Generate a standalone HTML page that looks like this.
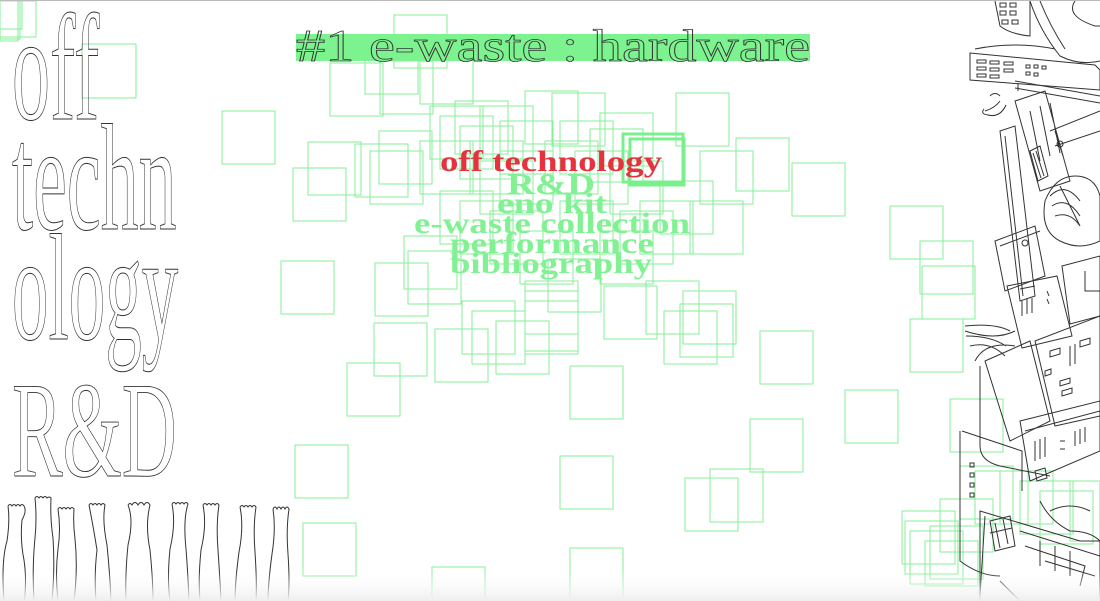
<!DOCTYPE html>
<html><head><meta charset="utf-8"><style>
html,body{margin:0;padding:0;background:#fff;}
body{width:1100px;height:600px;overflow:hidden;position:relative;border-top:1px solid #bbb;box-sizing:border-box;}
svg{position:absolute;left:0;top:0;}
</style></head><body>
<svg width="1100" height="600" viewBox="0 0 1100 600" xmlns="http://www.w3.org/2000/svg">
<defs><linearGradient id="fade" x1="0" y1="0" x2="0" y2="1"><stop offset="0" stop-color="#fff" stop-opacity="0"/><stop offset="1" stop-color="#eee" stop-opacity="1"/></linearGradient></defs>
<g fill="none" stroke="#86ef98" stroke-width="1">
<rect x="0" y="0" width="22" height="28"/><rect x="0" y="0" width="20" height="38"/><rect x="0" y="0" width="36" height="36"/><rect x="0" y="0" width="18" height="40"/>
<rect x="82" y="43" width="54" height="54"/>
<rect x="222" y="110" width="53" height="53"/><rect x="293" y="167" width="53" height="53"/><rect x="308" y="141" width="53" height="53"/><rect x="330" y="62" width="53" height="53"/>
<rect x="355" y="143" width="53" height="53"/><rect x="370" y="150" width="53" height="53"/><rect x="379" y="130" width="53" height="53"/>
<rect x="394" y="14" width="53" height="53"/><rect x="365" y="40" width="53" height="53"/><rect x="380" y="60" width="53" height="53"/><rect x="420" y="50" width="53" height="53"/>
<rect x="281" y="260" width="53" height="53"/><rect x="374" y="322" width="53" height="53"/><rect x="347" y="362" width="53" height="53"/>
<rect x="375" y="262" width="53" height="53"/><rect x="404" y="235" width="53" height="53"/><rect x="408" y="250" width="53" height="53"/>
<rect x="435" y="328" width="53" height="53"/><rect x="462" y="300" width="53" height="53"/><rect x="472" y="310" width="53" height="53"/>
<rect x="496" y="320" width="53" height="53"/><rect x="525" y="300" width="53" height="53"/><rect x="525" y="280" width="53" height="53"/><rect x="525" y="290" width="53" height="60"/>
<rect x="570" y="365" width="53" height="53"/><rect x="604" y="285" width="53" height="53"/><rect x="646" y="280" width="53" height="53"/><rect x="664" y="310" width="53" height="53"/><rect x="683" y="290" width="53" height="53"/><rect x="680" y="303" width="53" height="53"/>
<rect x="295" y="444" width="53" height="53"/><rect x="303" y="522" width="53" height="53"/><rect x="432" y="566" width="53" height="53"/><rect x="570" y="547" width="53" height="53"/>
<rect x="560" y="455" width="53" height="53"/><rect x="685" y="477" width="53" height="53"/><rect x="710" y="468" width="53" height="53"/><rect x="750" y="418" width="53" height="53"/>
<rect x="845" y="389" width="53" height="53"/><rect x="760" y="330" width="53" height="53"/><rect x="792" y="162" width="53" height="53"/><rect x="736" y="137" width="53" height="53"/>
<rect x="676" y="92" width="53" height="53"/><rect x="700" y="150" width="53" height="53"/><rect x="660" y="180" width="53" height="53"/><rect x="690" y="200" width="53" height="53"/>
<rect x="455" y="100" width="53" height="53"/><rect x="480" y="105" width="53" height="53"/><rect x="525" y="90" width="53" height="53"/><rect x="552" y="92" width="53" height="53"/><rect x="600" y="112" width="53" height="53"/>
<rect x="430" y="105" width="53" height="53"/><rect x="440" y="115" width="53" height="53"/><rect x="460" y="125" width="53" height="53"/><rect x="500" y="120" width="53" height="53"/><rect x="560" y="120" width="53" height="53"/><rect x="590" y="128" width="53" height="53"/>
<rect x="420" y="140" width="53" height="53"/><rect x="440" y="190" width="53" height="53"/><rect x="520" y="230" width="53" height="53"/><rect x="548" y="258" width="53" height="53"/><rect x="600" y="230" width="53" height="53"/><rect x="640" y="200" width="53" height="53"/>
<rect x="470" y="140" width="53" height="53"/><rect x="480" y="160" width="53" height="53"/><rect x="500" y="150" width="53" height="53"/><rect x="545" y="140" width="53" height="53"/><rect x="575" y="150" width="53" height="53"/><rect x="610" y="160" width="53" height="53"/>
<rect x="460" y="200" width="53" height="53"/><rect x="490" y="210" width="53" height="53"/><rect x="560" y="200" width="53" height="53"/><rect x="620" y="210" width="53" height="53"/>
<rect x="890" y="205" width="53" height="53"/><rect x="920" y="240" width="53" height="53"/><rect x="922" y="265" width="53" height="53"/><rect x="910" y="318" width="53" height="53"/><rect x="950" y="398" width="53" height="53"/>
<rect x="960" y="465" width="53" height="53"/><rect x="975" y="470" width="53" height="53"/><rect x="1000" y="470" width="53" height="53"/><rect x="1020" y="480" width="53" height="53"/><rect x="1040" y="490" width="53" height="53"/><rect x="1070" y="480" width="30" height="60"/>
<rect x="902" y="510" width="53" height="53"/><rect x="905" y="520" width="53" height="53"/><rect x="910" y="530" width="53" height="53"/><rect x="930" y="525" width="53" height="53"/><rect x="940" y="498" width="53" height="53"/><rect x="925" y="540" width="53" height="45"/>
</g>
<g fill="none" stroke="#7af08c" stroke-width="3"><rect x="623" y="133" width="60" height="48"/><rect x="630" y="138" width="54" height="46"/></g>
<rect x="296" y="33" width="514" height="27" fill="#7cf38e"/>
<text x="296" y="60" font-family="'Liberation Serif', serif" font-size="46" textLength="514" lengthAdjust="spacingAndGlyphs" fill="none" stroke="#333" stroke-width="0.8">#1 e-waste : hardware</text>
<g font-family="'Liberation Serif', serif" font-size="152" fill="none" stroke="#333" stroke-width="1">
<text transform="translate(12,118) scale(0.5,1)">off</text>
<text transform="translate(12,228) scale(0.5,1)">techn</text>
<text transform="translate(12,338) scale(0.48,1)">ology</text>
<text transform="translate(12,475) scale(0.5,0.9)">R&amp;D</text>
</g>
<g font-family="'Liberation Serif', serif" font-weight="bold" text-anchor="middle" fill="#82f194">
<text x="551" y="193" font-size="30" textLength="88" lengthAdjust="spacingAndGlyphs">R&amp;D</text>
<text x="552" y="212" font-size="30" textLength="110" lengthAdjust="spacingAndGlyphs">eno kit</text>
<text x="552" y="232" font-size="30" textLength="276" lengthAdjust="spacingAndGlyphs">e-waste collection</text>
<text x="552" y="252" font-size="30" textLength="204" lengthAdjust="spacingAndGlyphs">performance</text>
<text x="551" y="272" font-size="30" textLength="202" lengthAdjust="spacingAndGlyphs">bibliography</text>
</g>
<text x="551" y="170" font-family="'Liberation Serif', serif" font-weight="bold" font-size="30" text-anchor="middle" textLength="222" lengthAdjust="spacingAndGlyphs" fill="#e5323e">off technology</text>
<g fill="none" stroke="#333" stroke-width="1">
<path d="M8 505 q2 -3 4 0 q2 -3 4 0 q2 -3 4 0 q2 -3 4 0 q3 5 -2 14 q-2 20 2 40 q3 20 0 45 M8 505 q2 15 -1 35 q-6 20 -3 60"/>
<path d="M35 497 q2 -3 4 0 q2 -3 4 0 q2 -3 4 0 q2 -2 4 0 q-1 20 2 40 q2 30 -1 63 M35 497 q2 20 0 40 q-3 30 -1 63"/>
<path d="M58 508 q2 -3 4 0 q2 -3 4 0 q2 -3 4 0 q2 -3 4 0 q-1 15 1 30 q3 30 -1 62 M58 508 q3 20 0 40 q-3 25 0 52"/>
<path d="M89 504 q2 -3 4 0 q2 -3 4 0 q2 -3 4 0 q2 -3 4 0 q-3 15 2 40 q3 30 4 56 M89 504 q4 20 8 45 q-3 25 -1 51"/>
<path d="M128 504 q2 -3 4 0 q3 -5 6 0 q3 -5 6 0 q3 -5 6 0 q-5 20 0 45 q3 30 3 51 M128 504 q6 15 0 40 q-3 30 -2 56"/>
<path d="M172 503 q2 -3 4 0 q2 -3 4 0 q2 -3 4 0 q2 -3 4 0 q-5 15 -2 45 q2 25 3 52 M172 503 q4 20 -2 45 q-3 30 0 52"/>
<path d="M203 504 q2 -3 4 0 q2 -3 4 0 q2 -3 4 0 q2 -3 4 0 q-3 20 -1 45 q2 30 3 51 M203 504 q4 20 -2 45 q-3 30 -1 51"/>
<path d="M240 506 q2 -3 4 0 q2 -3 4 0 q2 -3 4 0 q2 -3 4 0 q-3 20 -1 45 q2 30 1 49 M240 506 q4 20 -1 45 q-4 30 -4 49"/>
<path d="M273 508 q2 -4 4 0 q2 -4 4 0 q2 -4 4 0 q2 -4 4 0 q-3 20 -1 45 q2 30 0 47 M273 508 q3 20 -1 45 q-4 30 -4 47"/>
</g>
<g fill="none" stroke="#333" stroke-width="1">
<path d="M995 0 l5 25 q10 8 30 10 l0 -35"/><rect x="1000" y="2" width="6" height="4"/><rect x="1010" y="2" width="6" height="4"/><rect x="1000" y="10" width="6" height="4"/><rect x="1010" y="10" width="6" height="4"/><rect x="1002" y="19" width="6" height="4"/><rect x="1012" y="19" width="6" height="4"/>
<path d="M1030 0 q10 30 30 55 q20 10 40 5 M1040 0 q10 25 25 48 M1075 0 q-10 15 20 25 l5 0"/>
<path d="M970 52 l125 12 l5 5 l0 20 l-130 -10 z M975 48 q40 -8 80 0"/>
<rect x="977" y="59" width="9" height="3"/><rect x="990" y="60" width="9" height="3"/><rect x="1004" y="61" width="9" height="3"/><rect x="977" y="66" width="9" height="3"/><rect x="990" y="67" width="9" height="3"/><rect x="1004" y="68" width="9" height="3"/><rect x="977" y="73" width="9" height="3"/><rect x="990" y="74" width="9" height="3"/>
<rect x="1026" y="64" width="4" height="3"/><rect x="1034" y="64" width="4" height="3"/><rect x="1042" y="65" width="4" height="3"/><rect x="1026" y="71" width="4" height="3"/><rect x="1034" y="72" width="4" height="3"/>
<path d="M1015 80 l85 15 M1015 87 l85 15 M1018 82 l0 8"/>
<path d="M985 110 q10 -3 15 -10 M984 108 q-4 5 4 6 q12 3 18 -10 M990 95 q5 -5 10 0"/>
<path d="M1000 130 l15 -5 l20 170 l-15 5 z M1005 135 l18 160"/>
<path d="M1015 100 l30 -10 l25 90 l-30 10 z M1030 110 l10 50 M1040 105 l10 50 M1050 102 l10 50"/>
<path d="M1030 150 l10 -5 l8 30 l-10 5 z M1033 152 l8 25 M1036 150 l8 25"/>
<path d="M1050 130 l50 -20 M1055 145 l45 -15 M1055 130 l8 25"/><circle cx="1060" cy="143" r="3"/>
<path d="M1045 200 q10 -25 30 -25 q20 0 25 20 l0 45 q-20 10 -40 0 q-20 -10 -15 -40 z M1050 195 q15 -15 30 5 M1052 205 q15 -10 28 10 M1055 215 q15 -5 25 10 M1060 185 l20 40"/>
<path d="M995 240 l40 -15 l10 50 l-40 15 z M1000 245 l40 -15"/><circle cx="1025" cy="242" r="3"/>
<path d="M1007 285 l50 -10 l15 60 l-50 12 z M1062 265 l38 -10 l0 60 l-30 8 z M1085 270 l0 20 l15 0"/>
<path d="M1020 288 l15 -3 M1022 300 l0 15 M1027 298 l0 15 M1032 297 l0 15 M1047 290 l2 5 M1047 298 l2 5"/>
<path d="M965 325 q30 -3 45 5 M965 330 q30 10 50 0 M966 335 q25 0 40 10 M970 345 q20 -5 35 10 M975 360 q10 -20 40 -15"/>
<path d="M985 360 l45 -20 l20 80 l-40 20 z M1035 340 l65 -25 l0 100 l-45 10 z"/>
<path d="M1050 350 l10 -3 l0 6 l-10 3 z M1080 340 l10 -3 l0 6 l-10 3 z M1045 370 l6 -2 l0 5 l-6 2 z M1060 380 l10 -3 l0 5 l-10 3 z M1062 390 l10 -3 l0 5 l-10 3 z M1070 345 l0 20 M1075 343 l0 20"/>
<path d="M980 365 l0 80 q0 15 20 20 l50 10"/>
<path d="M1020 420 l80 -20 l0 50 l-70 30 z M1025 430 l75 -20 M1035 440 l0 20 M1040 438 l0 20 M1045 436 l0 20 M1060 440 l5 0 M1060 448 l5 0 M1075 430 l0 15 M1080 428 l0 15 M1085 426 l0 15"/>
<path d="M960 430 l0 130 q20 15 40 15 M962 430 l60 20 l0 40"/>
<rect x="970" y="462" width="4" height="4"/><rect x="970" y="472" width="4" height="4"/><rect x="970" y="482" width="4" height="4"/><rect x="970" y="492" width="4" height="4"/>
<path d="M1035 470 l10 -3 l2 10 l-10 3 z"/>
<path d="M980 510 l100 30 l20 0 l0 60 l-120 0 z M985 515 l-5 80"/>
<path d="M990 520 l20 -5 l5 30 l-20 5 z M995 522 l5 25 M1003 518 l5 25 M990 532 l22 -5"/>
<path d="M1020 530 l80 25 M1025 545 l60 20 l-5 20 M1040 540 l0 25 M1055 545 l0 25 M1070 550 l0 25 M1045 560 l50 15"/>
<path d="M1040 500 q10 20 30 30 q20 0 30 10 M1000 580 l20 20 M1050 510 q20 -10 40 0"/>
</g>
<rect x="0" y="570" width="1100" height="30" fill="url(#fade)"/>
</svg>
</body></html>
